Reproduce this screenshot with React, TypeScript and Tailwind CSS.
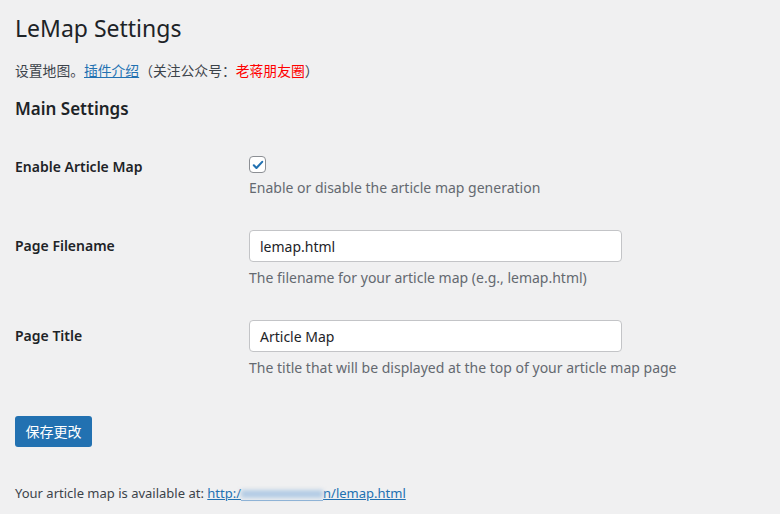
import React from "react";

const font = { fontFamily: '"Noto Sans", "Noto Sans CJK SC", sans-serif' };

export default function App() {
  return (
    <div
      className="min-h-screen w-full bg-[#f0f0f1] px-[15px] text-[#1d2327] [font-family:'Noto_Sans','Noto_Sans_CJK_SC',sans-serif]"
      style={font}
    >
      <h1 className="pt-[13px] text-[23px] font-normal leading-[30px]">LeMap Settings</h1>
      <p className="mt-[18px] text-[13.8px] leading-[20px] text-[#3c434a]">
        设置地图。
        <a href="#" className="text-[#2271b1] underline">插件介绍</a>
        （关注公众号：<span className="text-[#ff0000]">老蒋朋友圈</span>）
      </p>
      <h2 className="mt-[16px] text-[17px] font-semibold leading-[24px]">Main Settings</h2>

      <div className="mt-[35px] grid grid-cols-[234px_1fr]">
        <div className="pt-[1px] text-[14px] font-semibold leading-[20px]">Enable Article Map</div>
        <div>
          <span className="flex h-[17px] w-[17px] items-center justify-center rounded-[4px] border border-[#8c8f94] bg-white">
            <svg width="14" height="14" viewBox="0 0 20 20">
              <path d="M4 10.5l3.8 3.8L16 5.5" fill="none" stroke="#2271b1" strokeWidth="3" strokeLinecap="round" strokeLinejoin="round" />
            </svg>
          </span>
          <p className="mt-[5px] text-[14px] leading-[20px] text-[#646970]">Enable or disable the article map generation</p>
        </div>

        <div className="mt-[32px] pt-[6px] text-[14px] font-semibold leading-[20px]">Page Filename</div>
        <div className="mt-[32px]">
          <div className="flex h-[32px] w-[373px] items-center rounded-[4px] border border-[#c3c4c7] bg-white px-[10px] text-[14px]">
            lemap.html
          </div>
          <p className="mt-[6px] text-[14px] leading-[20px] text-[#646970]">The filename for your article map (e.g., lemap.html)</p>
        </div>

        <div className="mt-[32px] pt-[6px] text-[14px] font-semibold leading-[20px]">Page Title</div>
        <div className="mt-[32px]">
          <div className="flex h-[32px] w-[373px] items-center rounded-[4px] border border-[#c3c4c7] bg-white px-[10px] text-[14px]">
            Article Map
          </div>
          <p className="mt-[6px] text-[14px] leading-[20px] text-[#646970]">The title that will be displayed at the top of your article map page</p>
        </div>
      </div>

      <button className="mt-[38px] flex h-[31px] w-[77px] items-center justify-center rounded-[3px] bg-[#2271b1] text-[14px] text-white">
        保存更改
      </button>

      <p className="mt-[36px] text-[13px] leading-[20px] text-[#3c434a]">
        Your article map is available at:{" "}
        <a href="#" className="text-[#2271b1] underline">
          http:/
          <span className="relative inline-block h-[14px] w-[82px] align-[-3px]">
            <span className="absolute inset-x-0 top-[3px] h-[8px] bg-[#b3cce4] blur-[2px]" />
            <span className="absolute inset-x-0 bottom-0 h-px bg-[#8fb3d6]" />
          </span>
          n/lemap.html
        </a>
      </p>
    </div>
  );
}
